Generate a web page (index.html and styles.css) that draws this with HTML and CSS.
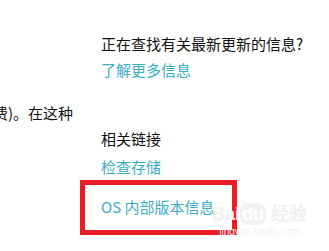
FILE: index.html
```html
<!DOCTYPE html>
<html lang="zh-CN">
  <head>
    <meta charset="UTF-8" />
    <meta name="viewport" content="width=device-width, initial-scale=1.0" />
    <title>关于</title>
    <link rel="stylesheet" href="styles.css">
  </head>
  <body>
    <div class="page">
      <div class="left-col">
        <p class="cut-text">费)。在这种</p>
      </div>
      <div class="right-col">
        <p class="title">正在查找有关最新更新的信息?</p>
        <a class="link more" href="#">了解更多信息</a>
        <p class="title related">相关链接</p>
        <a class="link storage" href="#">检查存储</a>
        <div class="mark-box">
          <a class="link" href="#">OS 内部版本信息</a>
        </div>
      </div>
    </div>
    <div class="watermark">
      <div class="wm-logo">Bai<span class="wm-paw">du</span> 经验</div>
      <div class="wm-url">jingyan.baidu.com</div>
    </div>
  </body>
</html>
```

FILE: styles.css
```css
/* Global Styles */
body {
  margin: 0;
  width: 329px;
  height: 251px;
  overflow: hidden;
  position: relative;
  background: #fff;
  color: #111;
  font-family: "Noto Sans CJK SC", "Noto Sans", sans-serif;
  font-size: 15px;
}

p {
  margin: 0;
}

.page {
  display: flex;
}

.left-col {
  width: 101px;
  flex-shrink: 0;
  padding-top: 103px;
}

.cut-text {
  margin-left: -7px;
  line-height: 20px;
  white-space: nowrap;
}

.right-col {
  display: flex;
  flex-direction: column;
  align-items: flex-start;
  padding-top: 34px;
}

.title {
  line-height: 20px;
  white-space: nowrap;
}

.link {
  display: block;
  line-height: 20px;
  color: #3aaec6;
  text-decoration: none;
  white-space: nowrap;
}

.more {
  margin-top: 6px;
}

.related {
  margin-top: 49px;
}

.storage {
  margin-top: 8px;
}

.mark-box {
  box-sizing: border-box;
  width: 157px;
  margin: 3px 0 0 -21px;
  padding: 12px 0 13px 16px;
  border: 5px solid #ec1c24;
}

/* faint watermark over the corner */
.watermark {
  position: absolute;
  left: 212px;
  top: 203px;
  color: #f0f0f0;
  font-family: "Liberation Sans", sans-serif;
  text-align: center;
}

.wm-logo {
  font-size: 18px;
  font-weight: bold;
  line-height: 22px;
}

.wm-paw {
  display: inline-block;
  padding: 0 2px;
  border-radius: 8px;
  background: #f2f2f2;
  color: #fff;
}

.wm-url {
  font-size: 10px;
  line-height: 14px;
}
```
